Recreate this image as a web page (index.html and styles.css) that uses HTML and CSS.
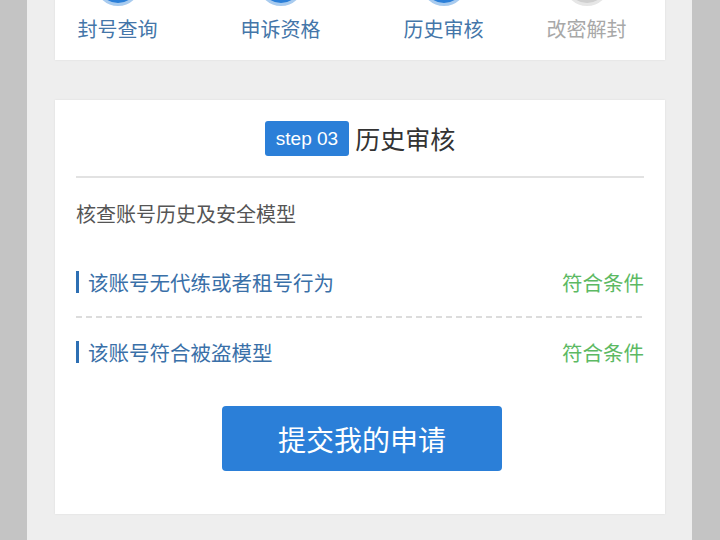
FILE: index.html
```html
<!DOCTYPE html>
<html lang="zh-CN">
<head>
<meta charset="utf-8">
<title>历史审核</title>
<link rel="stylesheet" href="styles.css">
</head>
<body>
<div class="screen">
  <div class="card steps">
    <div class="step done"><span class="dot"></span><span class="label">封号查询</span></div>
    <div class="step done"><span class="dot"></span><span class="label">申诉资格</span></div>
    <div class="step done"><span class="dot"></span><span class="label">历史审核</span></div>
    <div class="step todo"><span class="dot"></span><span class="label">改密解封</span></div>
  </div>
  <div class="card main">
    <div class="head"><span class="badge">step 03</span><span class="title">历史审核</span></div>
    <div class="rule"></div>
    <p class="desc">核查账号历史及安全模型</p>
    <div class="row"><span class="item">该账号无代练或者租号行为</span><span class="ok">符合条件</span></div>
    <div class="dash"></div>
    <div class="row"><span class="item">该账号符合被盗模型</span><span class="ok">符合条件</span></div>
    <div class="actions"><button class="submit">提交我的申请</button></div>
  </div>
</div>
</body>
</html>
```
FILE: styles.css
```css
html, body {
  margin: 0;
  padding: 0;
  height: 540px;
  overflow: hidden;
  background: #c4c4c4;
  font-family: "Noto Sans CJK SC", "Noto Sans", sans-serif;
}
.screen {
  width: 610px;
  margin-left: 27px;
  height: 540px;
  background: #eeeeee;
  padding: 0 27px 0 28px;
  display: flex;
  flex-direction: column;
  gap: 40px;
}
.card {
  background: #ffffff;
  box-shadow: 0 0 2px rgba(0, 0, 0, 0.08);
}
.steps {
  margin-top: -60px;
  padding: 20px 0 17px 0;
  display: grid;
  grid-template-columns: 163px 163px 143px auto;
  padding-left: 22px;
}
.step {
  display: flex;
  flex-direction: column;
  align-items: center;
  width: 81px;
  gap: 9px;
}
.dot {
  position: relative;
  width: 40px;
  height: 40px;
  border-radius: 50%;
  border: 3px solid #a8cbef;
  background: #2b7fd8;
}
.done .dot::after {
  content: "";
  position: absolute;
  left: 14px;
  bottom: 5px;
  width: 12px;
  height: 2px;
  background: #e8f1fb;
  border-radius: 1px;
}
.todo .dot {
  border-color: #e6e6e6;
  background: #cfcfcf;
}
.label {
  font-size: 20px;
  line-height: 28px;
  color: #4476a9;
  white-space: nowrap;
}
.todo .label {
  color: #a8a8a8;
}
.main {
  padding: 21px 21px 43px 21px;
  display: flex;
  flex-direction: column;
}
.head {
  display: flex;
  justify-content: center;
  align-items: center;
  gap: 6px;
}
.badge {
  background: #2b7fd8;
  color: #fff;
  font-family: "Liberation Sans", Arial, sans-serif;
  font-size: 19px;
  height: 35px;
  line-height: 35px;
  padding: 0 11px;
  border-radius: 3px;
}
.title {
  font-size: 25px;
  color: #333;
  line-height: 35px;
}
.rule {
  height: 2px;
  background: #e2e2e2;
  margin-top: 20px;
}
.desc {
  margin: 22px 0 0 0;
  font-size: 20px;
  line-height: 28px;
  color: #555;
}
.row {
  display: flex;
  justify-content: space-between;
  align-items: center;
  height: 68px;
}
.desc + .row {
  margin-top: 20px;
}
.dash {
  height: 2px;
  background: repeating-linear-gradient(90deg, #dcdcdc 0 6px, transparent 6px 10px);
}
.item {
  border-left: 3px solid #2d6fb3;
  padding-left: 9px;
  font-size: 20.5px;
  line-height: 22px;
  color: #3a70a8;
}
.ok {
  font-size: 20.5px;
  color: #5cb963;
}
.actions {
  display: flex;
  justify-content: center;
  margin-top: 20px;
}
.submit {
  width: 280px;
  height: 65px;
  border: none;
  border-radius: 4px;
  background: #2b7fd8;
  color: #fff;
  font-family: "Noto Sans CJK SC", "Noto Sans", sans-serif;
  font-size: 28px;
  margin-left: 4px;
}
```
